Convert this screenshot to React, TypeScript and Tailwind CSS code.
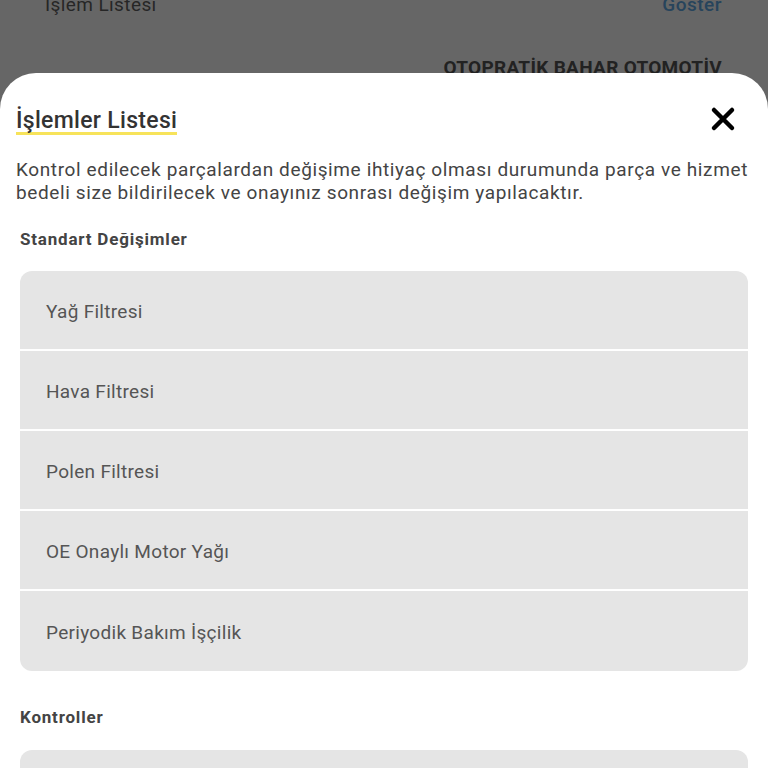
import React from "react";

const items = ["Yağ Filtresi", "Hava Filtresi", "Polen Filtresi", "OE Onaylı Motor Yağı", "Periyodik Bakım İşçilik"];

export default function App() {
  return (
    <div className="h-[768px] w-[768px] overflow-hidden bg-[#666666] flex flex-col" style={{ fontFamily: "Roboto, 'Noto Sans', sans-serif" }}>
      <div className="h-[73px] shrink-0 overflow-hidden relative">
        <div className="flex justify-between items-center pl-[45px] pr-[46px] h-[28px] -mt-[9px]">
          <span className="text-[19px] tracking-[0.4px] text-[#262626]">İşlem Listesi</span>
          <span className="text-[19px] tracking-[0.5px] font-medium text-[#27445c]">Göster</span>
        </div>
        <div className="flex justify-end pr-[46px] mt-[35px]">
          <span className="text-[19px] leading-[28px] font-bold text-[#222222] tracking-[0.3px]">OTOPRATİK BAHAR OTOMOTİV</span>
        </div>
      </div>
      <div className="flex-1 bg-white rounded-t-[36px] flex flex-col">
        <div className="flex items-start justify-between pl-[16px] pr-[32px] pt-[33px]">
          <div className="relative">
            <span className="text-[23px] tracking-[0.3px] font-medium text-[#333333] leading-[30px] relative z-10">İşlemler Listesi</span>
            <div className="absolute left-0 right-0 bottom-[1px] h-[3px] bg-[#f7e35a]" />
          </div>
          <svg width="26" height="26" viewBox="0 0 26 26">
            <path d="M4 4 L22 22 M22 4 L4 22" stroke="#000" strokeWidth="4.5" strokeLinecap="round" />
          </svg>
        </div>
        <p className="pl-[16px] pr-0 mt-[22px] text-[19px] tracking-[0.62px] leading-[23px] text-[#444444]">
          Kontrol edilecek parçalardan değişime ihtiyaç olması durumunda parça ve hizmet bedeli size bildirilecek ve onayınız sonrası değişim yapılacaktır.
        </p>
        <h3 className="pl-[20px] mt-[23px] text-[17px] tracking-[0.8px] font-bold text-[#444444] leading-[24px]">Standart Değişimler</h3>
        <div className="mx-[20px] mt-[20px] rounded-[12px] bg-[#e5e5e5] overflow-hidden flex flex-col">
          {items.map((t, i) => (
            <div key={t} className={`h-[80px] flex items-center pl-[26px] pt-[4px] text-[19px] tracking-[0.3px] text-[#555555] ${i < items.length - 1 ? "border-b-2 border-white" : ""}`}>
              {t}
            </div>
          ))}
        </div>
        <h3 className="pl-[20px] mt-[34px] text-[17px] tracking-[0.8px] font-bold text-[#444444] leading-[24px]">Kontroller</h3>
        <div className="mx-[20px] mt-[21px] rounded-[12px] bg-[#e5e5e5] h-[80px]" />
      </div>
    </div>
  );
}
